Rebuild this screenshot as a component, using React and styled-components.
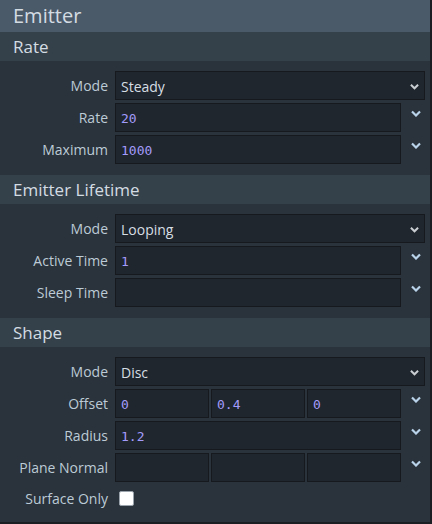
import React from "react";
import styled, { createGlobalStyle } from "styled-components";

const Global = createGlobalStyle`
  html, body { margin: 0; padding: 0; background: #2a323b; }
  body { font-family: "Open Sans", "Liberation Sans", sans-serif; }
  * { box-sizing: border-box; }
`;

const Panel = styled.div`
  width: 432px;
  height: 524px;
  background: #2a323b;
  border-right: 2px solid #1b1f24;
  border-bottom: 2px solid #1b1f24;
  overflow: hidden;
`;

const Title = styled.div`
  height: 32px;
  background: #4b5a69;
  color: #d4dce3;
  font-size: 20px;
  line-height: 32px;
  padding-left: 13px;
`;

const SectionHeader = styled.div`
  height: 29px;
  background: #35414a;
  color: #d4dce3;
  font-size: 17px;
  line-height: 29px;
  padding-left: 13px;
`;

const SectionBody = styled.div`
  display: flex;
  flex-direction: column;
  gap: 3px;
  padding: 10px 0 11px;
`;

const Row = styled.div`
  display: flex;
  align-items: center;
  height: ${(p) => (p.$short ? "26px" : "29px")};
`;

const Label = styled.div`
  width: 108px;
  margin-right: 7px;
  text-align: right;
  color: #bccbd6;
  font-size: 14px;
  white-space: nowrap;
`;

const Field = styled.div`
  display: flex;
  width: 310px;
  height: 29px;
`;

const Box = styled.div`
  height: 29px;
  background: #20262d;
  border: 1px solid #161a1e;
  display: flex;
  align-items: center;
  padding-left: 5px;
  padding-top: 1px;
`;

const SelectBox = styled(Box)`
  width: 310px;
  justify-content: space-between;
  padding-right: 5px;
  color: #d6dee4;
  font-size: 14px;
`;

const Inputs = styled.div`
  display: flex;
  gap: 2px;
  width: 286px;
`;

const NumBox = styled(Box)`
  flex: 1;
  color: #a39bfb;
  font-family: "DejaVu Sans Mono", "Liberation Mono", monospace;
  font-size: 13px;
`;

const ChevCell = styled.div`
  width: 24px;
  display: flex;
  align-items: flex-start;
  justify-content: center;
  padding-left: 6px;
  padding-top: 7px;
`;

const Check = styled.div`
  width: 15px;
  height: 15px;
  margin-left: 4px;
  background: #ffffff;
  border: 1px solid #9aa3ab;
  border-radius: 2px;
`;

const Chevron = ({ color, w = 10 }) => (
  <svg width={w} height="7" viewBox="0 0 10 7">
    <polyline points="1,1.5 5,5.5 9,1.5" fill="none" stroke={color} strokeWidth="2.2" />
  </svg>
);

const SelectRow = ({ label, value }) => (
  <Row>
    <Label>{label}</Label>
    <SelectBox>
      <span>{value}</span>
      <Chevron color="#c9ced3" w={9} />
    </SelectBox>
  </Row>
);

const NumRow = ({ label, values }) => (
  <Row>
    <Label>{label}</Label>
    <Field>
      <Inputs>
        {values.map((v, i) => (
          <NumBox key={i}>{v}</NumBox>
        ))}
      </Inputs>
      <ChevCell>
        <Chevron color="#b9d3ea" />
      </ChevCell>
    </Field>
  </Row>
);

export default function App() {
  return (
    <>
      <Global />
      <Panel>
        <Title>Emitter</Title>
        <SectionHeader>Rate</SectionHeader>
        <SectionBody>
          <SelectRow label="Mode" value="Steady" />
          <NumRow label="Rate" values={["20"]} />
          <NumRow label="Maximum" values={["1000"]} />
        </SectionBody>
        <SectionHeader>Emitter Lifetime</SectionHeader>
        <SectionBody>
          <SelectRow label="Mode" value="Looping" />
          <NumRow label="Active Time" values={["1"]} />
          <NumRow label="Sleep Time" values={[""]} />
        </SectionBody>
        <SectionHeader>Shape</SectionHeader>
        <SectionBody>
          <SelectRow label="Mode" value="Disc" />
          <NumRow label="Offset" values={["0", "0.4", "0"]} />
          <NumRow label="Radius" values={["1.2"]} />
          <NumRow label="Plane Normal" values={["", "", ""]} />
          <Row $short>
            <Label>Surface Only</Label>
            <Check />
          </Row>
        </SectionBody>
      </Panel>
    </>
  );
}
